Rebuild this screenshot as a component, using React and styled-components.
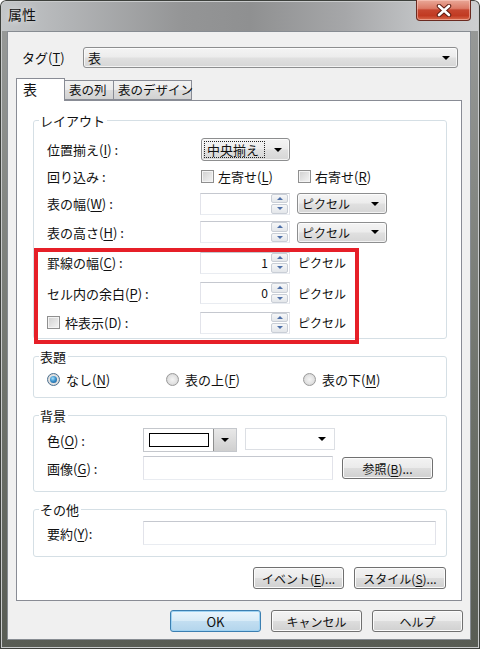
import React from 'react';
import styled, { createGlobalStyle } from 'styled-components';

const GlobalStyle = createGlobalStyle`
  html, body { margin: 0; padding: 0; }
  body {
    font-family: "Noto Sans CJK JP", "Noto Sans", sans-serif;
    font-size: 12px;
    color: #111;
  }
  * { box-sizing: border-box; }
  u { text-underline-offset: 2px; }
`;

const Window = styled.div`
  width: 480px;
  height: 649px;
  display: flex;
  flex-direction: column;
  border-radius: 6px 6px 0 0;
  overflow: hidden;
  background:
    linear-gradient(90deg, #c4c7c9 0%, #b2b4b6 14%, #949596 38%, #8f9091 52%, #a6a7a9 72%, #c2c4c6 88%, #cdcfd1 100%) top / 100% 31px no-repeat,
    linear-gradient(180deg, #9a9c9b 0%, #6f736c 60%, #585c54 100%);
  box-shadow: inset 0 0 0 1px #3d403c, inset 0 0 0 2px #c9cbcc;
`;

const TitleBar = styled.div`
  height: 31px;
  flex: none;
  display: flex;
  justify-content: space-between;
  align-items: flex-start;
`;

const Title = styled.div`
  padding: 5px 0 0 8px;
  font-size: 14px;
  line-height: 18px;
  color: #111;
  text-shadow: 0 0 6px rgba(255, 255, 255, 0.7);
`;

const CloseButton = styled.div`
  width: 55px;
  height: 21px;
  margin-right: 9px;
  display: flex;
  align-items: center;
  justify-content: center;
  border: 1px solid #6a2a20;
  border-top: none;
  border-radius: 0 0 4px 4px;
  background: linear-gradient(#e9a898 0%, #dc7a66 42%, #c64630 50%, #c13a22 78%, #d8694c 100%);
  box-shadow: inset 0 0 0 1px rgba(255, 210, 200, 0.5);
`;

const Client = styled.div`
  flex: none;
  width: 464px;
  margin-left: 7px;
  border: 1px solid #878c92;
  background: #f0f0f0;
  padding: 15px 8px 7px 8px;
  display: flex;
  flex-direction: column;
`;

const TagRow = styled.div`
  display: flex;
  align-items: center;
  height: 21px;
  padding: 0 4px 0 6px;
`;

const TagLabel = styled.div`
  width: 61px;
  line-height: 21px;
  font-size: 13px;
`;

const Combo = styled.div`
  display: flex;
  align-items: center;
  flex: ${p => (p.$grow ? 1 : 'none')};
  width: ${p => (p.$w ? `${p.$w}px` : 'auto')};
  height: ${p => p.$h || 21}px;
  margin-left: ${p => p.$ml || 0}px;
  padding: 0 7px 0 4px;
  border: 1px solid #8d8e8f;
  border-radius: 3px;
  background: linear-gradient(#f4f4f4 0%, #ececec 48%, #e0e0e0 52%, #d6d6d6 100%);
  box-shadow: inset 0 0 0 1px rgba(255, 255, 255, 0.7);
  line-height: 17px;
  font-size: 12px;
`;

const Arrow = styled.span`
  margin-left: ${p => (p.$center ? 0 : 'auto')};
  width: 0;
  height: 0;
  border-left: 4px solid transparent;
  border-right: 4px solid transparent;
  border-top: 4px solid #000;
`;

const FocusText = styled.span`
  border: 1px dotted #222;
  padding: 0 5px 0 2px;
  margin-left: -2px;
  line-height: 15px;
  font-size: 13px;
`;

const TabStrip = styled.div`
  display: flex;
  align-items: flex-end;
  height: 22px;
  margin-top: 10px;
`;

const Tab = styled.div`
  width: ${p => p.$w}px;
  height: ${p => (p.$active ? 23 : 20)}px;
  margin-bottom: ${p => (p.$active ? -1 : 0)}px;
  margin-left: ${p => (p.$first ? 0 : -1)}px;
  position: relative;
  z-index: ${p => (p.$active ? 2 : 1)};
  padding: ${p => (p.$active ? '2px 0 0 6px' : '1px 0 0 4px')};
  border: 1px solid #898c95;
  border-bottom: ${p => (p.$active ? 'none' : '1px solid #898c95')};
  background: ${p => (p.$active ? '#fff' : 'linear-gradient(#f2f2f2 0%, #ebebeb 50%, #dddddd 50%, #d2d2d2 100%)')};
  font-size: ${p => (p.$active ? 14 : 12.5)}px;
  line-height: 16px;
  white-space: nowrap;
`;

const Panel = styled.div`
  width: 446px;
  border: 1px solid #898c95;
  background: #fff;
  padding: 12px 14px 11px 16px;
  display: flex;
  flex-direction: column;
`;

const Group = styled.fieldset`
  margin: ${p => (p.$first ? 0 : 10)}px 0 0 0;
  padding: 0;
  width: 414px;
  border: 1px solid #d5dfe5;
  border-radius: 3px;
  min-inline-size: 0;
`;

const Legend = styled.legend`
  margin-left: 5px;
  padding: 0 2px 0 1px;
  line-height: 15px;
  font-size: 13px;
`;

const GroupBody = styled.div`
  padding: ${p => p.$pt}px 8px ${p => p.$pb}px 13px;
  display: flex;
  flex-direction: column;
  gap: ${p => p.$gap || 0}px;
`;

const Row = styled.div`
  display: flex;
  align-items: center;
  height: ${p => p.$h}px;
  font-size: 13px;
`;

const Label = styled.div`
  width: ${p => p.$w}px;
  flex: none;
  white-space: nowrap;
  display: flex;
  align-items: center;
`;

const CheckItem = styled.label`
  display: flex;
  align-items: center;
  width: ${p => (p.$w ? `${p.$w}px` : 'auto')};
  margin-left: ${p => p.$ml || 0}px;
  white-space: nowrap;
`;

const CheckBox = styled.span`
  width: 13px;
  height: 13px;
  flex: none;
  margin-right: ${p => p.$gap || 4}px;
  border: 1px solid #8f8f8f;
  background: linear-gradient(135deg, #cfcfcf 0%, #e6e6e6 60%, #f4f4f4 100%);
  box-shadow: inset 0 0 0 1px #f4f4f4;
`;

const Radio = styled.span`
  width: 13px;
  height: 13px;
  flex: none;
  margin-right: 6px;
  border-radius: 50%;
  border: 1px solid ${p => (p.$on ? '#4a7090' : '#9a9a9a')};
  background: radial-gradient(circle at 50% 50%, #f4f4f4 0%, #e2e2e2 55%, #c4c4c4 100%);
  display: flex;
  align-items: center;
  justify-content: center;
  &::after {
    content: '';
    display: ${p => (p.$on ? 'block' : 'none')};
    width: 7px;
    height: 7px;
    border-radius: 50%;
    background: radial-gradient(circle at 40% 35%, #a6e0fb 0%, #3d93cc 45%, #12508c 100%);
  }
`;

const RadioItem = styled.label`
  display: flex;
  align-items: center;
  width: ${p => (p.$w ? `${p.$w}px` : 'auto')};
  white-space: nowrap;
`;

const TextBox = styled.div`
  display: flex;
  align-items: center;
  flex: none;
  width: ${p => p.$w}px;
  height: ${p => p.$h || 24}px;
  background: #fff;
  border: 1px solid #e2e3ea;
  border-top-color: #c5c8cf;
  border-bottom-color: #e9ecf1;
  margin-right: ${p => p.$mr || 0}px;
`;

const SpinValue = styled.div`
  flex: 1;
  text-align: right;
  padding-right: 3px;
  line-height: 18px;
  font-size: 12px;
`;

const SpinButtons = styled.div`
  width: 18px;
  height: 100%;
  display: flex;
  flex-direction: column;
  gap: 1px;
  padding: 0 1px 0 0;
`;

const SpinButton = styled.div`
  flex: 1;
  display: flex;
  align-items: center;
  justify-content: center;
  border: 1px solid #c9ced6;
  border-radius: 2px;
  background: linear-gradient(#f6f7f8, #e3e6ea);
  &::after {
    content: '';
    width: 0;
    height: 0;
    border-left: 3px solid transparent;
    border-right: 3px solid transparent;
    ${p => (p.$down ? 'border-top: 3px solid #4d6fa8;' : 'border-bottom: 3px solid #4d6fa8;')}
  }
`;

const Unit = styled.span`
  margin-left: 8px;
  font-size: 12px;
`;

const ColorPicker = styled.div`
  display: flex;
  align-items: stretch;
  width: 94px;
  height: 24px;
  border: 1px solid #c4c7cc;
  background: #fff;
`;

const Swatch = styled.div`
  flex: 1;
  margin: 4px 4px 4px 5px;
  border: 1px solid #000;
  background: #fff;
`;

const SwatchButton = styled.div`
  width: 23px;
  display: flex;
  align-items: center;
  justify-content: center;
  border-left: 1px solid #8e8f8f;
  background: linear-gradient(#e8e8e8, #cfcfcf);
`;

const PlainSelect = styled.div`
  display: flex;
  align-items: center;
  width: 90px;
  height: 22px;
  margin-left: 8px;
  margin-bottom: 2px;
  padding-right: 8px;
  background: #fff;
  border: 1px solid #dcdfe4;
`;

const Button = styled.div`
  width: ${p => p.$w || 91}px;
  height: 22px;
  flex: none;
  display: flex;
  align-items: center;
  justify-content: center;
  border: 1px solid ${p => (p.$default ? '#3c7fb1' : '#707070')};
  border-radius: 3px;
  background: ${p => (p.$default
    ? 'linear-gradient(#eaf5fc 0%, #d8ebf7 48%, #c2def1 52%, #b3d5ec 100%)'
    : 'linear-gradient(#f3f3f3 0%, #ebebeb 48%, #dddddd 52%, #d0d0d0 100%)')};
  box-shadow: inset 0 0 0 1px ${p => (p.$default ? '#9fd3f3' : '#fbfbfb')};
  font-size: ${p => (p.$big ? 13 : 12)}px;
  color: #111;
  white-space: nowrap;
`;

const ButtonRow = styled.div`
  display: flex;
  justify-content: flex-end;
  gap: ${p => p.$gap}px;
  margin-top: ${p => p.$mt}px;
  margin-right: ${p => p.$mr || 0}px;
`;

const Highlight = styled.div`
  position: relative;
`;

const Annotation = styled.div`
  position: absolute;
  top: 1px;
  left: -13px;
  width: 325px;
  height: 96px;
  border: 4px solid #e61f28;
  pointer-events: none;
`;

const CloseGlyph = () => (
  <svg width="16" height="13" viewBox="0 0 16 13">
    <path d="M3 2 L13 11 M13 2 L3 11" stroke="#5d1c12" strokeWidth="4.5" strokeLinecap="round" fill="none" />
    <path d="M3 2 L13 11 M13 2 L3 11" stroke="#fff" strokeWidth="2.6" strokeLinecap="round" fill="none" />
  </svg>
);

const Spin = ({ value }) => (
  <TextBox $w={90} $h={22}>
    <SpinValue>{value}</SpinValue>
    <SpinButtons>
      <SpinButton />
      <SpinButton $down />
    </SpinButtons>
  </TextBox>
);

const PixelSelect = () => (
  <Combo $w={90} $h={21} $ml={7}>
    <span>ピクセル</span>
    <Arrow />
  </Combo>
);

const LABEL_W = 153;

export default function App() {
  return (
    <>
      <GlobalStyle />
      <Window>
        <TitleBar>
          <Title>属性</Title>
          <CloseButton><CloseGlyph /></CloseButton>
        </TitleBar>

        <Client>
          <TagRow>
            <TagLabel>タグ(<u>T</u>)</TagLabel>
            <Combo $grow $h={21}>
              <span style={{ fontSize: 13 }}>表</span>
              <Arrow />
            </Combo>
          </TagRow>

          <TabStrip>
            <Tab $w={49} $active $first>表</Tab>
            <Tab $w={50}>表の列</Tab>
            <Tab $w={79}>表のデザイン</Tab>
          </TabStrip>

          <Panel>
            <Group $first>
              <Legend>レイアウト</Legend>
              <GroupBody $pt={8} $pb={1}>
                <Row $h={27}>
                  <Label $w={LABEL_W}><span>位置揃え(<u>I</u>) :</span></Label>
                  <Combo $w={89} $h={23} $ml={1}>
                    <FocusText>中央揃え</FocusText>
                    <Arrow />
                  </Combo>
                </Row>
                <Row $h={27}>
                  <Label $w={LABEL_W}><span>回り込み :</span></Label>
                  <CheckItem $w={97} $ml={1}>
                    <CheckBox /><span>左寄せ(<u>L</u>)</span>
                  </CheckItem>
                  <CheckItem>
                    <CheckBox /><span>右寄せ(<u>R</u>)</span>
                  </CheckItem>
                </Row>
                <Row $h={27}>
                  <Label $w={LABEL_W}><span>表の幅(<u>W</u>) :</span></Label>
                  <Spin />
                  <PixelSelect />
                </Row>
                <Row $h={30}>
                  <Label $w={LABEL_W}><span>表の高さ(<u>H</u>) :</span></Label>
                  <Spin />
                  <PixelSelect />
                </Row>
                <Highlight>
                  <Row $h={31}>
                    <Label $w={LABEL_W}><span>罫線の幅(<u>C</u>) :</span></Label>
                    <Spin value="1" />
                    <Unit>ピクセル</Unit>
                  </Row>
                  <Row $h={30}>
                    <Label $w={LABEL_W}><span>セル内の余白(<u>P</u>) :</span></Label>
                    <Spin value="0" />
                    <Unit>ピクセル</Unit>
                  </Row>
                  <Row $h={29}>
                    <Label $w={LABEL_W}><CheckBox $gap={5} /><span>枠表示(D) :</span></Label>
                    <Spin />
                    <Unit>ピクセル</Unit>
                  </Row>
                  <Annotation />
                </Highlight>
              </GroupBody>
            </Group>

            <Group>
              <Legend>表題</Legend>
              <GroupBody $pt={3} $pb={6}>
                <Row $h={24}>
                  <RadioItem $w={119}><Radio $on /><span>なし(<u>N</u>)</span></RadioItem>
                  <RadioItem $w={137}><Radio /><span>表の上(<u>F</u>)</span></RadioItem>
                  <RadioItem><Radio /><span>表の下(<u>M</u>)</span></RadioItem>
                </Row>
              </GroupBody>
            </Group>

            <Group>
              <Legend>背景</Legend>
              <GroupBody $pt={5} $pb={11} $gap={4}>
                <Row $h={24}>
                  <Label $w={96}><span>色(<u>O</u>) :</span></Label>
                  <ColorPicker>
                    <Swatch />
                    <SwatchButton><Arrow $center /></SwatchButton>
                  </ColorPicker>
                  <PlainSelect><Arrow /></PlainSelect>
                </Row>
                <Row $h={24}>
                  <Label $w={96}><span>画像(<u>G</u>) :</span></Label>
                  <TextBox $w={190} $h={24} $mr={9} />
                  <Button $w={91}><span>参照(<u>B</u>)...</span></Button>
                </Row>
              </GroupBody>
            </Group>

            <Group>
              <Legend>その他</Legend>
              <GroupBody $pt={4} $pb={11}>
                <Row $h={24}>
                  <Label $w={96}><span>要約(<u>Y</u>):</span></Label>
                  <TextBox $w={293} $h={24} />
                </Row>
              </GroupBody>
            </Group>

            <ButtonRow $gap={10} $mt={10} $mr={1}>
              <Button $w={91}><span>イベント(<u>E</u>)...</span></Button>
              <Button $w={92}><span>スタイル(<u>S</u>)...</span></Button>
            </ButtonRow>
          </Panel>

          <ButtonRow $gap={10} $mt={9} $mr={-1}>
            <Button $default $big>OK</Button>
            <Button>キャンセル</Button>
            <Button>ヘルプ</Button>
          </ButtonRow>
        </Client>
      </Window>
    </>
  );
}
